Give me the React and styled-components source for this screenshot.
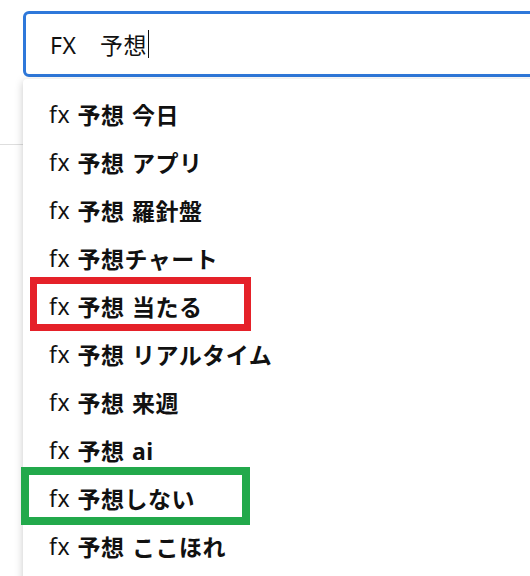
import React from 'react';
import styled, { createGlobalStyle } from 'styled-components';

const GlobalStyle = createGlobalStyle`
  html, body {
    margin: 0;
    padding: 0;
    background: #fff;
    overflow: hidden;
  }
  body {
    font-family: "Noto Sans", "Noto Sans CJK JP", sans-serif;
    color: #111;
  }
`;

const Page = styled.div`
  position: relative;
  width: 530px;
  height: 576px;
  overflow: hidden;
`;

const Header = styled.div`
  height: 145px;
  border-bottom: 1px solid #dedede;
  box-sizing: border-box;
  display: flex;
  flex-direction: column;
  padding: 11px 0 0 23px;
`;

const SearchWrap = styled.div`
  position: relative;
  width: 560px;
`;

const SearchBox = styled.div`
  height: 66px;
  box-sizing: border-box;
  border: 3px solid #2e78da;
  border-radius: 6px;
  display: flex;
  align-items: center;
  padding-left: 24px;
  font-size: 23px;
  letter-spacing: 0.5px;
  color: #111;
`;

const Caret = styled.span`
  display: inline-block;
  width: 1px;
  height: 28px;
  background: #111;
  margin-left: 1px;
`;

const Dropdown = styled.ul`
  position: absolute;
  top: 68px;
  left: 0;
  width: 100%;
  height: 520px;
  margin: 0;
  padding: 11px 0 0;
  list-style: none;
  background: #fff;
  border-radius: 4px 4px 0 0;
  box-shadow: 0 2px 9px rgba(0, 0, 0, 0.22);
`;

const Item = styled.li`
  height: 48px;
  display: flex;
  align-items: center;
  padding-left: 26px;
  font-size: 23px;
  word-spacing: 1px;
  letter-spacing: 0.5px;
  white-space: pre;
`;

const Strong = styled.b`
  font-weight: 700;
`;

const Mark = styled.div`
  position: absolute;
  left: ${(p) => p.x}px;
  top: ${(p) => p.y}px;
  width: ${(p) => p.w}px;
  height: ${(p) => p.h}px;
  box-sizing: border-box;
  border: ${(p) => p.t}px solid ${(p) => p.color};
  pointer-events: none;
`;

const items = [
  ' 予想 今日',
  ' 予想 アプリ',
  ' 予想 羅針盤',
  ' 予想チャート',
  ' 予想 当たる',
  ' 予想 リアルタイム',
  ' 予想 来週',
  ' 予想 ai',
  ' 予想しない',
  ' 予想 ここほれ',
];

export default function App() {
  return (
    <Page>
      <GlobalStyle />
      <Header>
        <SearchWrap>
          <SearchBox>
            FX　予想<Caret />
          </SearchBox>
          <Dropdown>
            {items.map((s) => (
              <Item key={s}>
                fx<Strong>{s}</Strong>
              </Item>
            ))}
          </Dropdown>
        </SearchWrap>
      </Header>
      <Mark x={30} y={277} w={221} h={54} t={7} color="#e52129" />
      <Mark x={21} y={467} w={229} h={58} t={8} color="#22a94b" />
    </Page>
  );
}
